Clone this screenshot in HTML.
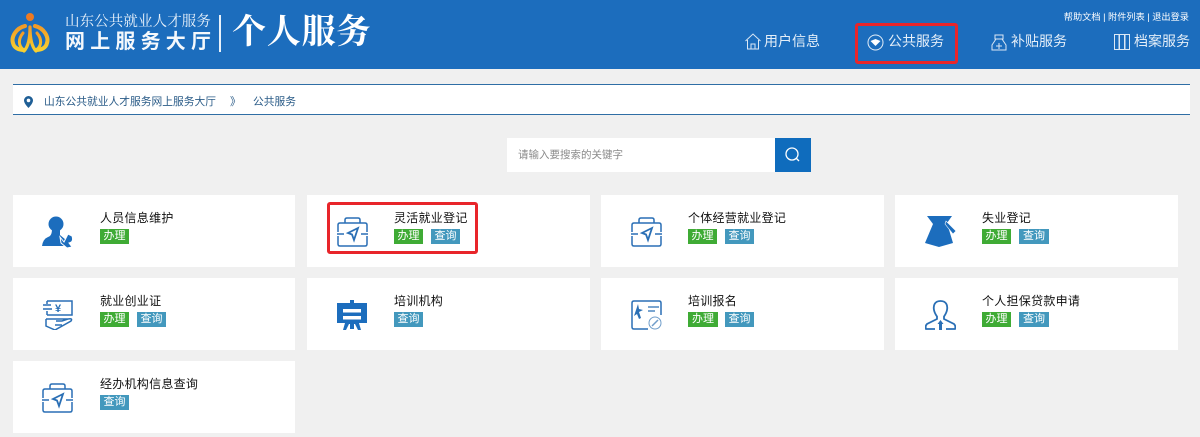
<!DOCTYPE html>
<html lang="zh"><head><meta charset="utf-8"><title>个人服务</title>
<style>
*{box-sizing:border-box}
html,body{margin:0;padding:0;width:1200px;height:437px;overflow:hidden;background:#f0f0f0;font-family:"Liberation Sans","Noto Sans CJK SC",sans-serif}
.a{position:absolute;white-space:nowrap}
#hd{left:0;top:0;width:1200px;height:69px;background:#1c6dbd}
.nav{color:#e4eef8;font-size:14px;letter-spacing:0;line-height:18px;top:32px}
.card{position:absolute;background:#fff;height:72px}
.t{position:absolute;left:87px;top:15px;font-size:12px;letter-spacing:.27px;line-height:16px;color:#111;white-space:nowrap}
.tag{position:absolute;top:34px;width:29px;height:15px;color:#fff;font-size:11px;line-height:15px;text-align:center}
.g{background:#3fab35}.b{background:#4398bd}
.ic{position:absolute;left:29px;top:22px;width:31px;height:30px}
.red{position:absolute;border:3px solid #e8252a;border-radius:3px}
</style></head><body>
<svg width="0" height="0" style="position:absolute"><defs>
<symbol id="case" viewBox="0 0 31 30"><g fill="none" stroke="#2a6fb5" stroke-width="1.500"><path d="M8 6V3Q8 1 10 1H21Q23 1 23 3V6"/><path d="M1 15V8Q1 6 3 6H28Q30 6 30 8V15M1 19V27Q1 29 3 29H28Q30 29 30 27V19"/><path d="M0 17H7M24 17H31"/></g><path d="M21 11L11 16L15 17.500L17 23Z" fill="#fff" stroke="#2a6fb5" stroke-width="1.800"/></symbol>
</defs></svg>

<div class="a" id="hd"></div>
<svg class="a" style="left:10px;top:12px" width="40" height="42" viewBox="0 0 40 42">
<defs><linearGradient id="lg" x1="0" y1="0" x2="0" y2="1"><stop offset="0" stop-color="#f19a27"/><stop offset="1" stop-color="#f8d030"/></linearGradient></defs>
<circle cx="20" cy="5" r="4" fill="#ee7a22"/>
<g fill="none" stroke="url(#lg)" stroke-linecap="round"><path d="M15 14C6 16 1 25 3 31C4 36 9 38 14 38" stroke-width="4"/><path d="M25 14C34 16 39 25 37 31C36 36 31 38 26 38" stroke-width="4"/><path d="M13 21C8 27 8 34 14 38" stroke-width="3"/><path d="M27 21C32 27 32 34 26 38" stroke-width="3"/><path d="M20 15C20 27 18 35 14 39M20 15C20 27 22 35 26 39" stroke-width="3.200"/></g></svg>
<div class="a" style="left:65px;top:13px;font-size:14.500px;letter-spacing:.1px;line-height:18px;color:#e8f1fa;font-family:'Liberation Serif','Noto Serif CJK SC',serif">山东公共就业人才服务</div>
<div class="a" style="left:65px;top:30px;font-size:20px;font-weight:700;letter-spacing:5.200px;line-height:24px;color:#f4f8fc">网上服务大厅</div>
<div class="a" style="left:219px;top:15px;width:2px;height:37px;background:#e8f1fa"></div>
<div class="a" style="left:232px;top:12px;font-size:34px;font-weight:700;letter-spacing:.8px;line-height:42px;color:#fff;font-family:'Liberation Serif','Noto Serif CJK SC',serif">个人服务</div>

<div class="a" style="right:11px;top:11px;font-size:9.200px;line-height:12px;color:#fff">帮助文档 | 附件列表 | 退出登录</div>

<svg class="a" style="left:745px;top:33px" width="16" height="17" viewBox="0 0 16 17"><path d="M.5 8L8 1L15.500 8M2.500 7V16H13.500V7M6 16V11H10V16" fill="none" stroke="#dbe8f5"/></svg>
<div class="a nav" style="left:764px">用户信息</div>
<svg class="a" style="left:867px;top:34px" width="17" height="17" viewBox="0 0 17 17"><circle cx="8.500" cy="8.500" r="7.500" fill="none" stroke="#e4eef8"/><path d="M3.500 7L8.500 5L13.500 7L8.500 12Z" fill="#fff"/></svg>
<div class="a nav" style="left:888px">公共服务</div>
<div class="red" style="left:855px;top:23px;width:103px;height:41px"></div>
<svg class="a" style="left:991px;top:34px" width="16" height="17" viewBox="0 0 16 17"><path d="M4 1H12V5H4ZM5 5L1 11V16H15V11L11 5M5 12H11M8 9V15" fill="none" stroke="#dbe8f5"/></svg>
<div class="a nav" style="left:1011px">补贴服务</div>
<svg class="a" style="left:1114px;top:34px" width="16" height="16" viewBox="0 0 16 16"><path d="M.5.500H5V15.500H.5ZM5.500.500H10.500V15.500H5.500ZM11 .5H15.500V15.500H11Z" fill="none" stroke="#dbe8f5"/></svg>
<div class="a nav" style="left:1134px">档案服务</div>

<div class="a" style="left:13px;top:84px;width:1177px;height:31px;background:#fff;border-top:1px solid #2f6ea5;border-bottom:1px solid #2f6ea5"></div>
<svg class="a" style="left:24px;top:96px" width="9" height="12" viewBox="0 0 9 12"><path d="M4.500 0A4.500 4.500 0 0 0 0 4.500C0 7.500 4.500 12 4.500 12S9 7.500 9 4.500A4.500 4.500 0 0 0 4.500 0ZM4.500 6.200A1.800 1.800 0 1 1 4.500 2.600A1.800 1.800 0 0 1 4.500 6.200Z" fill="#1f5f96"/></svg>
<div class="a" style="left:44px;top:95px;font-size:10.750px;line-height:14px;color:#2b5c88">山东公共就业人才服务网上服务大厅</div>
<div class="a" style="left:230px;top:95px;font-size:11px;line-height:14px;color:#2b5c88">》</div>
<div class="a" style="left:253px;top:95px;font-size:10.750px;line-height:14px;color:#2b5c88">公共服务</div>

<div class="a" style="left:507px;top:138px;width:268px;height:34px;background:#fff;padding-left:11px;font-size:10.500px;line-height:35px;color:#8a8a8a">请输入要搜索的关键字</div>
<div class="a" style="left:775px;top:138px;width:36px;height:34px;background:#0f6cbd"></div>
<svg class="a" style="left:784px;top:146px" width="17" height="17" viewBox="0 0 17 17"><circle cx="8" cy="8" r="6" fill="none" stroke="#fff" stroke-width="1.300"/><path d="M12 12L15 15" stroke="#fff" stroke-width="1.300"/></svg>

<div class="card" style="left:13px;top:195px;width:282px"><svg class="ic" style="top:21px;height:32px" viewBox="0 0 31 32"><circle cx="14" cy="8" r="7.500" fill="#1c6dbd"/><path d="M10 13H18V19L24 24V30H0Q1 23 6 21Q10 20 10 13Z" fill="#1c6dbd"/><path d="M18 21L22 26L26 18L30 20Q32 26 27 27L30 31L25 32L19 27Z" fill="#1c6dbd" stroke="#fff"/></svg><div class="t">人员信息维护</div><div class="tag g" style="left:87px">办理</div></div>

<div class="card" style="left:307px;top:195px;width:283px"><svg class="ic" style="left:30px" viewBox="0 0 31 30"><use href="#case"/></svg><div class="t">灵活就业登记</div><div class="tag g" style="left:87px">办理</div><div class="tag b" style="left:124px">查询</div></div>
<div class="red" style="left:327px;top:202px;width:151px;height:52px"></div>

<div class="card" style="left:601px;top:195px;width:283px"><svg class="ic" style="left:30px" viewBox="0 0 31 30"><use href="#case"/></svg><div class="t">个体经营就业登记</div><div class="tag g" style="left:87px">办理</div><div class="tag b" style="left:124px">查询</div></div>

<div class="card" style="left:895px;top:195px;width:283px"><svg class="ic" style="left:30px;top:21px;height:31px" viewBox="0 0 31 31"><path d="M2 0H27L22 7L28 27L14 31L0 27L8 8Z" fill="#1c6dbd"/><path d="M21 5L31 15L28 18L20 8Z" fill="#1c6dbd" stroke="#fff" stroke-width=".6"/></svg><div class="t">失业登记</div><div class="tag g" style="left:87px">办理</div><div class="tag b" style="left:124px;width:30px">查询</div></div>

<div class="card" style="left:13px;top:278px;width:282px"><svg class="ic" viewBox="0 0 31 30"><g fill="none" stroke="#2a6fb5" stroke-width="1.500"><path d="M5 1H30V15H5M5 1V4M1 5H9M1 9H10M5 11V15"/><path d="M4 19H26L20 21H14M4 19V26L13 30L29 21Q31 18 26 19"/><path d="M13 25H20"/></g><text x="13" y="12" font-size="11" font-weight="700" fill="#2a6fb5" font-family="Liberation Sans">¥</text></svg><div class="t">就业创业证</div><div class="tag g" style="left:87px">办理</div><div class="tag b" style="left:124px">查询</div></div>

<div class="card" style="left:307px;top:278px;width:283px"><svg class="ic" style="left:30px" viewBox="0 0 31 30"><path d="M13 0H17V3H30V23H22L24 30H21L18 24H17V29H13V24H12L9 30H6L8 23H0V3H13Z" fill="#1c6dbd"/><rect x="6" y="9" width="18" height="3.500" fill="#fff"/><rect x="6" y="16" width="18" height="3.500" fill="#fff"/></svg><div class="t">培训机构</div><div class="tag b" style="left:87px">查询</div></div>

<div class="card" style="left:601px;top:278px;width:283px"><svg class="ic" style="left:30px" viewBox="0 0 31 30"><g fill="none" stroke="#2a6fb5" stroke-width="1.500"><path d="M17 29H3Q1 29 1 27V3Q1 1 3 1H28Q30 1 30 3V15"/><path d="M17 7H28M17 11H24" stroke-width="1.200"/></g><path d="M7 4L8 9L12 10L8 12L10 18L8 19L6 14L3 16Z" fill="#2a6fb5"/><circle cx="24" cy="23" r="6" fill="none" stroke="#6f9dca"/><path d="M21 26L27 20" stroke="#6f9dca" stroke-width="1.500"/></svg><div class="t">培训报名</div><div class="tag g" style="left:87px;width:30px">办理</div><div class="tag b" style="left:124px">查询</div></div>

<div class="card" style="left:895px;top:278px;width:283px"><svg class="ic" style="left:30px" viewBox="0 0 31 30"><g fill="none" stroke="#2a6fb5" stroke-width="1.800"><path d="M15.500 1C10 1 8 5 9 10C9.500 13 11 15 12 16.500V19L2 24Q0 26 1 29H10M15.500 1C21 1 23 5 22 10C21.500 13 20 15 19 16.500V19L29 24Q31 26 30 29H21"/></g><path d="M15.500 20L18.500 24H17V30H14V24H12.500Z" fill="#2a6fb5"/></svg><div class="t">个人担保贷款申请</div><div class="tag g" style="left:87px">办理</div><div class="tag b" style="left:124px;width:30px">查询</div></div>

<div class="card" style="left:13px;top:361px;width:282px"><svg class="ic" viewBox="0 0 31 30"><use href="#case"/></svg><div class="t">经办机构信息查询</div><div class="tag b" style="left:87px">查询</div></div>
</body></html>
